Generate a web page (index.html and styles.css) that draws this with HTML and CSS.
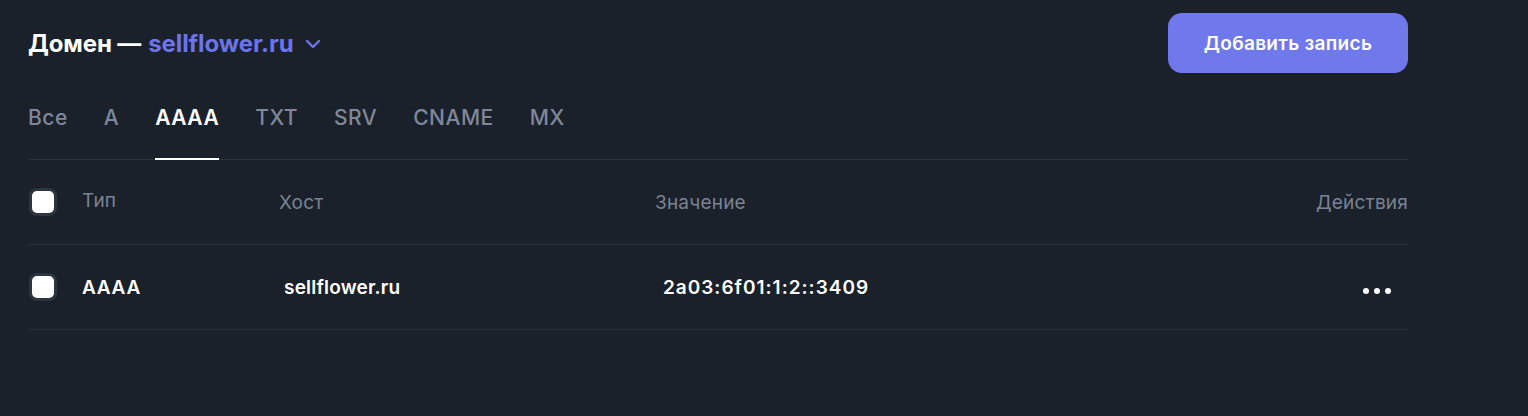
FILE: index.html
```html
<!DOCTYPE html>
<html lang="ru">
<head>
<meta charset="utf-8">
<title>DNS</title>
<link rel="stylesheet" href="styles.css">
</head>
<body>
<div class="page">
  <header class="top">
    <h1 class="title">Домен — <span class="domain">sellflower.ru</span>
      <svg class="chev" width="16" height="10" viewBox="0 0 16 10"><path d="M2 2l6 6 6-6" fill="none" stroke="currentColor" stroke-width="2.4" stroke-linecap="round" stroke-linejoin="round"/></svg>
    </h1>
    <button class="add">Добавить запись</button>
  </header>
  <nav class="tabs">
    <span class="tab">Все</span>
    <span class="tab">A</span>
    <span class="tab active">AAAA</span>
    <span class="tab">TXT</span>
    <span class="tab">SRV</span>
    <span class="tab">CNAME</span>
    <span class="tab">MX</span>
  </nav>
  <div class="table">
    <div class="row head">
      <span class="cb"></span>
      <span class="cell type">Тип</span>
      <span class="cell">Хост</span>
      <span class="cell">Значение</span>
      <span class="cell actions">Действия</span>
    </div>
    <div class="row body">
      <span class="cb"></span>
      <span class="cell type">AAAA</span>
      <span class="cell host">sellflower.ru</span>
      <span class="cell val">2a03:6f01:1:2::3409</span>
      <span class="cell actions"><span class="dots"><i></i><i></i><i></i></span></span>
    </div>
  </div>
</div>
</body>
</html>
```

FILE: styles.css
```css
html, body { margin: 0; padding: 0; }
body {
  background: #1b212b;
  font-family: "Inter", "Noto Sans", sans-serif;
  color: #ffffff;
}
.page {
  width: 1380px;
  padding: 13px 0 0 28px;
}
.top {
  display: flex;
  justify-content: space-between;
  align-items: center;
  height: 60px;
}
.title {
  margin: 0;
  font-size: 24px;
  font-weight: 700;
  letter-spacing: -0.1px;
  display: flex;
  align-items: center;
}
.domain { color: #6b74ea; margin-left: 7px; }
.chev { color: #6b74ea; margin-left: 11px; margin-top: 2px; }
.add {
  width: 240px;
  height: 60px;
  border: 0;
  border-radius: 14px;
  background: #6f79ec;
  color: #fff;
  font-family: inherit;
  font-size: 19px;
  font-weight: 600;
  letter-spacing: 0.3px;
}
.tabs {
  display: flex;
  gap: 36px;
  margin-top: 32px;
  border-bottom: 1px solid #2c323c;
}
.tab {
  font-size: 21px;
  font-weight: 500;
  color: #7f889a;
  padding-bottom: 28px;
  margin-bottom: -1px;
  border-bottom: 2px solid transparent;
  letter-spacing: 0.5px;
}
.tab.active { color: #fff; font-weight: 600; border-bottom-color: #fff; }
.row {
  display: grid;
  grid-template-columns: 54px 197px 376px 1fr auto;
  align-items: center;
  border-bottom: 1px solid #2c323c;
  height: 84px;
}
.cb {
  width: 22px;
  height: 22px;
  margin-left: 1px;
  background: #fff;
  border: 3px solid #2f3540;
  border-radius: 8px;
}
.head .cell { font-size: 19px; color: #7a8393; font-weight: 400; letter-spacing: 0.2px; }
.head .type { margin-top: -4px; }
.body .cell { font-size: 19px; font-weight: 600; color: #fff; letter-spacing: 0.2px; }
.body .type { letter-spacing: 0.7px; }
.host { padding-left: 5px; }
.body .val { padding-left: 8px; letter-spacing: 1px; }
.actions { text-align: right; }
.dots { display: inline-flex; gap: 5px; margin-right: 17px; }
.dots i { width: 6px; height: 6px; border-radius: 50%; background: #fff; display: block; }
```
